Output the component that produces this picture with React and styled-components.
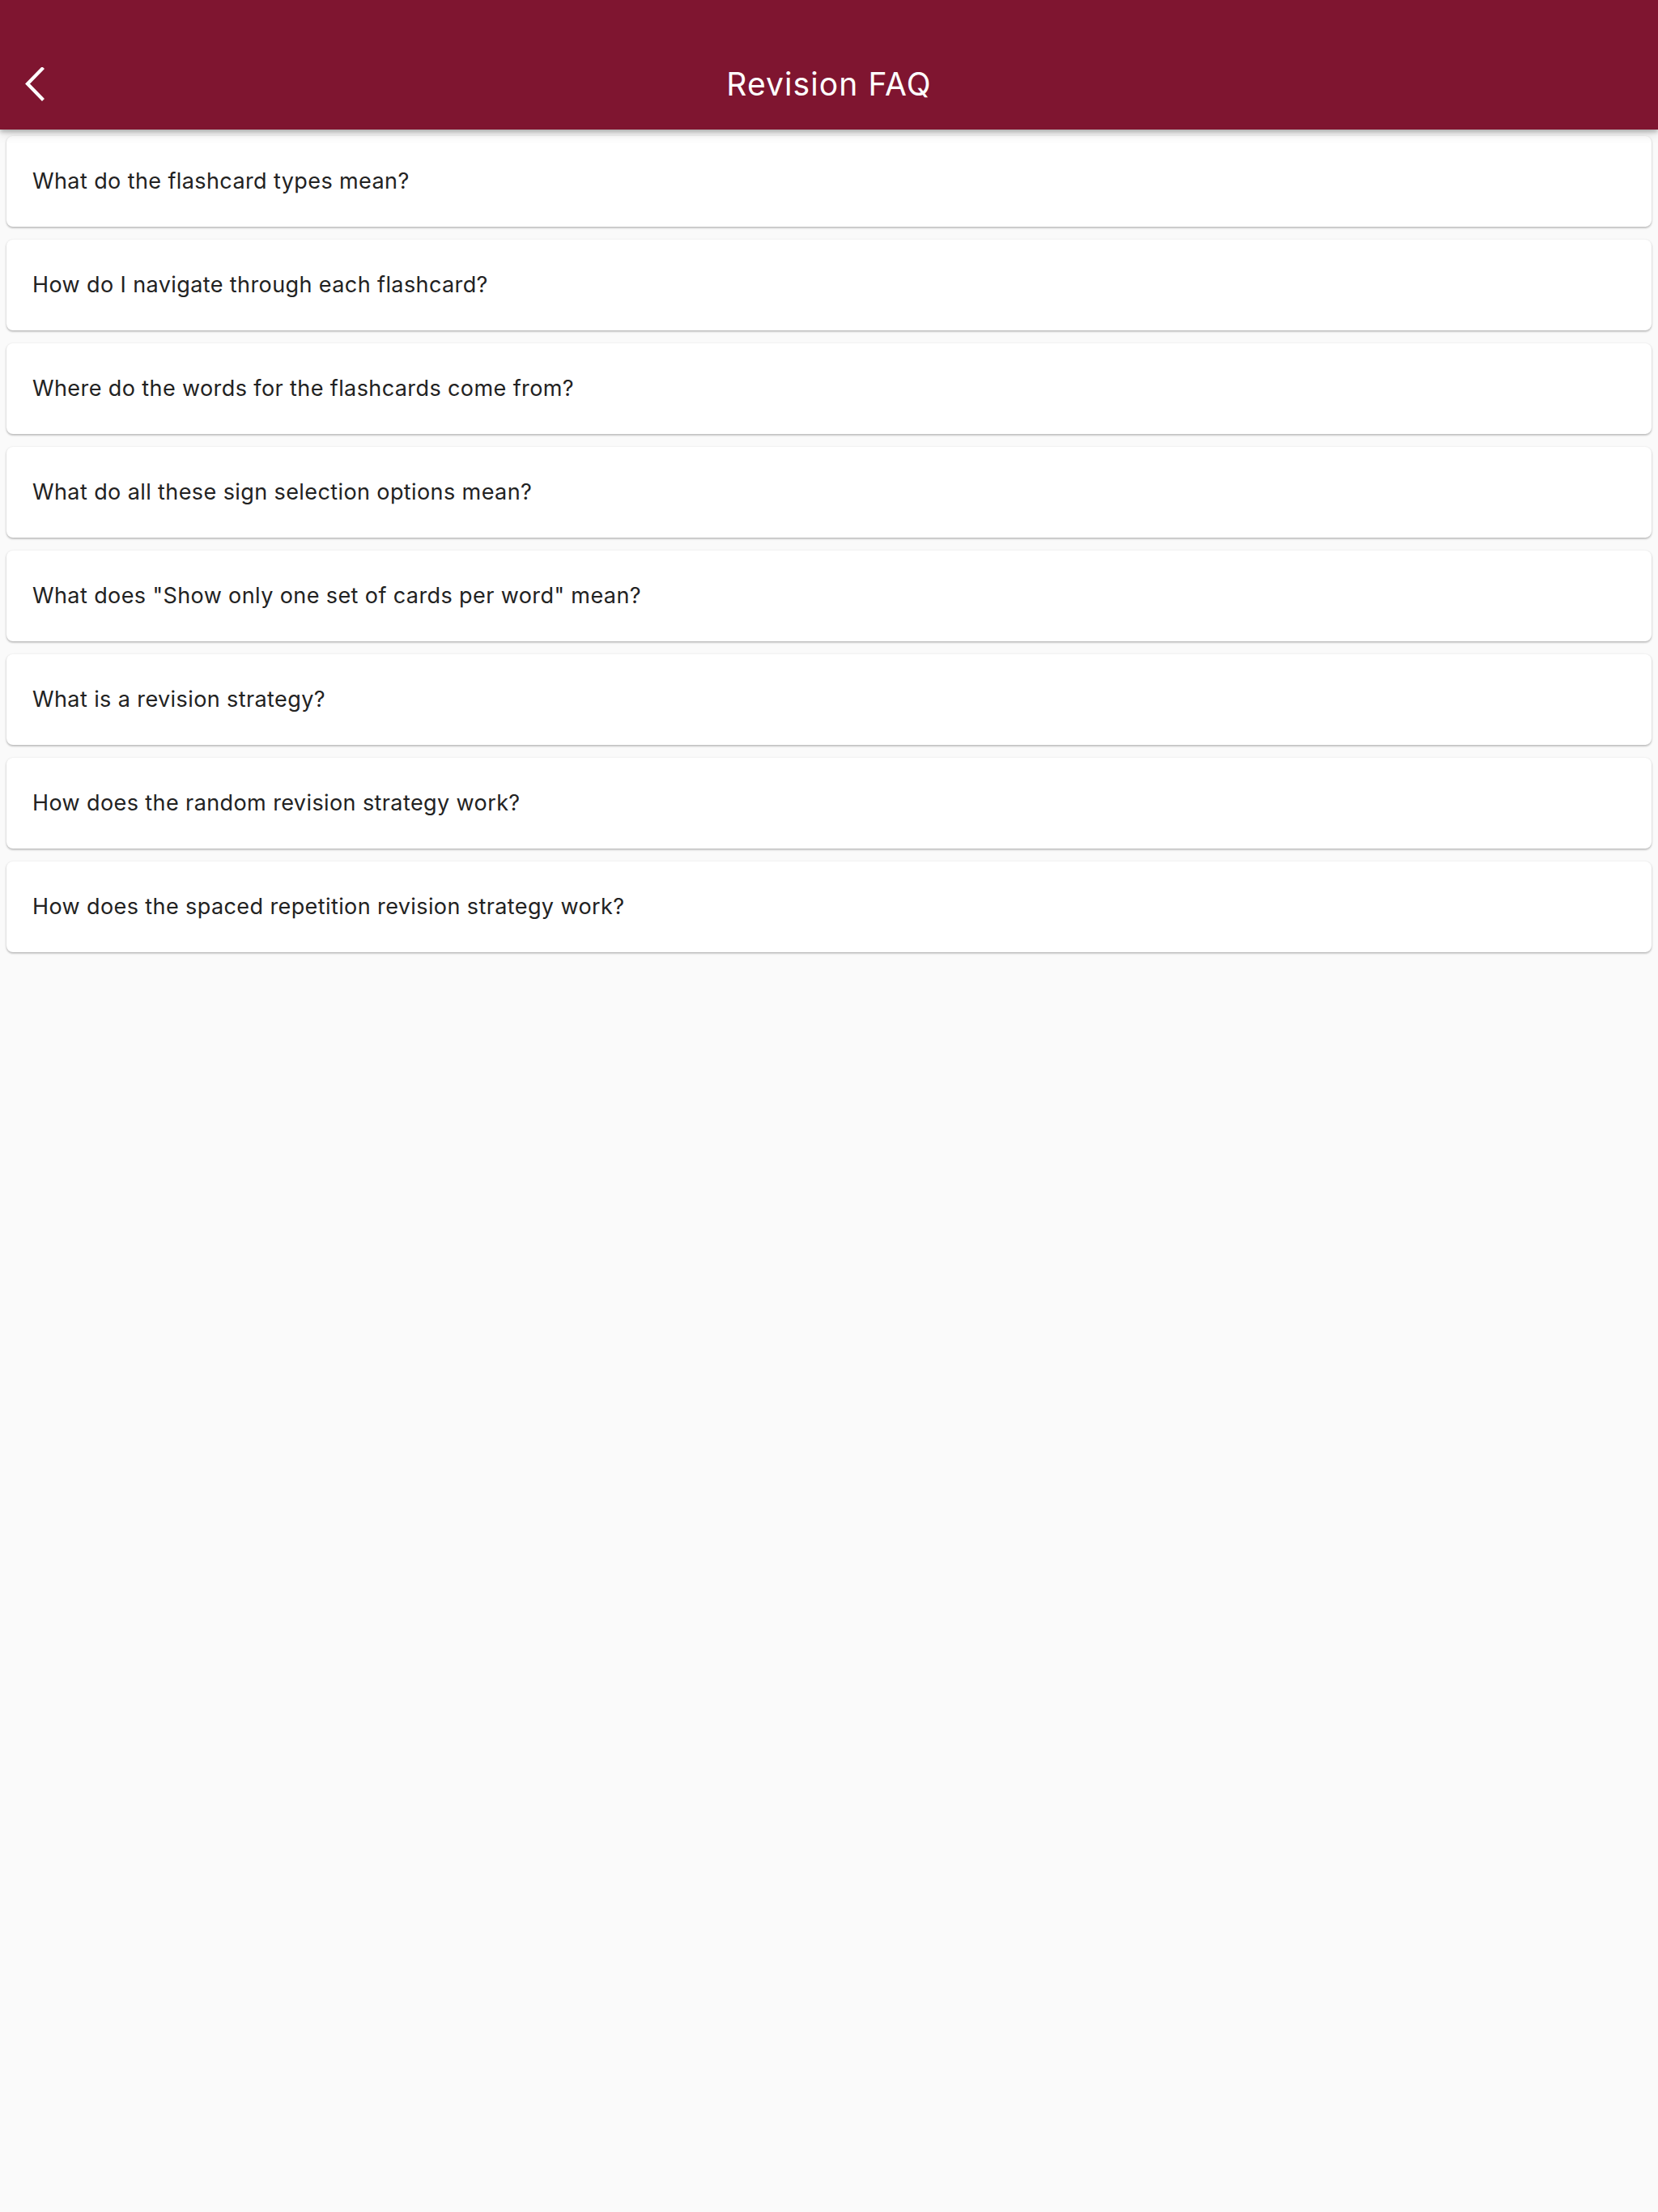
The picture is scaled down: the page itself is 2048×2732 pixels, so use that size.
import React from "react";
import styled, { createGlobalStyle } from "styled-components";

const GlobalStyle = createGlobalStyle`
  html, body { margin: 0; padding: 0; background: #fafafa; }
  body { font-family: Inter, Roboto, "Noto Sans", sans-serif; }
  * { box-sizing: border-box; }
`;

const Page = styled.div`
  width: 2048px;
  min-height: 2732px;
  background: #fafafa;
  display: flex;
  flex-direction: column;
`;

const Header = styled.header`
  position: relative;
  z-index: 2;
  height: 160px;
  padding-top: 48px;
  background: #7f1530;
  box-shadow: 0 3px 5px rgba(0, 0, 0, 0.22), 0 6px 12px rgba(0, 0, 0, 0.12);
`;

const Toolbar = styled.div`
  height: 112px;
  display: grid;
  grid-template-columns: 112px 1fr 112px;
  align-items: center;
`;

const BackButton = styled.button`
  width: 88px;
  height: 88px;
  padding: 0 0 0 30px;
  display: flex;
  align-items: center;
  background: none;
  border: none;
  color: #fff;
  cursor: pointer;
`;

const Title = styled.h1`
  margin: 0;
  text-align: center;
  color: #fff;
  font-family: Inter, Roboto, "Noto Sans", sans-serif;
  font-weight: 400;
  font-size: 39px;
  letter-spacing: 1.1px;
  line-height: 1;
  padding-bottom: 2px;
`;

const List = styled.main`
  display: flex;
  flex-direction: column;
  gap: 16px;
  padding: 8px;
`;

const Card = styled.div`
  height: 112px;
  background: #fff;
  border-radius: 8px;
  box-shadow: 0 1px 3px rgba(0, 0, 0, 0.22), 0 2px 2px rgba(0, 0, 0, 0.1);
  display: flex;
  align-items: center;
  padding: 0 32px 2px;
`;

const Question = styled.span`
  font-family: Inter, Roboto, "Noto Sans", sans-serif;
  font-size: 27px;
  letter-spacing: 0.4px;
  color: #222;
`;

const questions = [
  "What do the flashcard types mean?",
  "How do I navigate through each flashcard?",
  "Where do the words for the flashcards come from?",
  "What do all these sign selection options mean?",
  'What does "Show only one set of cards per word" mean?',
  "What is a revision strategy?",
  "How does the random revision strategy work?",
  "How does the spaced repetition revision strategy work?",
];

export default function App() {
  return (
    <Page>
      <GlobalStyle />
      <Header>
        <Toolbar>
          <BackButton aria-label="Back">
            <svg width="26" height="42" viewBox="0 0 26 42" fill="none">
              <polyline
                points="22,2 4,20.5 22,39"
                stroke="#fff"
                strokeWidth="4.2"
                strokeLinecap="square"
                strokeLinejoin="miter"
              />
            </svg>
          </BackButton>
          <Title>Revision FAQ</Title>
          <div />
        </Toolbar>
      </Header>
      <List>
        {questions.map((q) => (
          <Card key={q}>
            <Question>{q}</Question>
          </Card>
        ))}
      </List>
    </Page>
  );
}
